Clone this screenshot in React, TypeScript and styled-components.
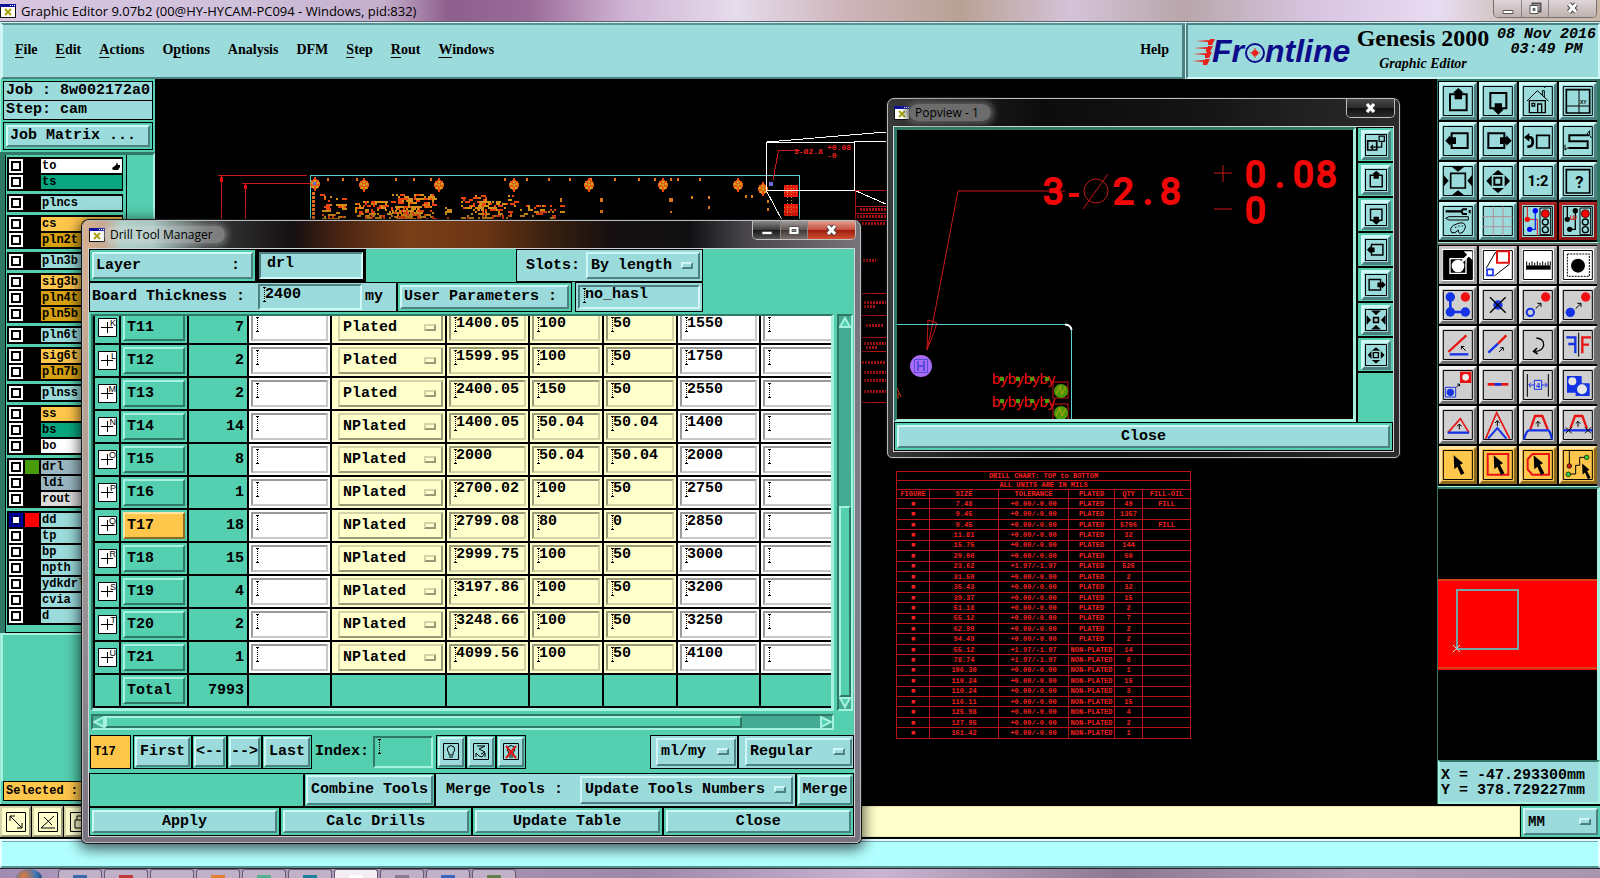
import React from 'react';
import styled, { createGlobalStyle, css } from 'styled-components';

const aqua = '#9cdbdb';
const teal = '#54cfb0';
const tealDark = '#2f7866';
const cream = '#ffffcc';
const orange = '#ffc64c';
const mono = "'Liberation Mono', 'Courier New', monospace";
const ui = "'Open Sans', 'Noto Sans', sans-serif";
const serif = "'Liberation Serif', 'Times New Roman', serif";

const tones = {
  aqua: { bg: aqua, light: '#cff7f5', dark: '#4d8080' },
  teal: { bg: teal, light: '#a4f2df', dark: '#2f7866' },
  white: { bg: '#ffffff', light: '#c8c8c8', dark: '#9a9a9a' },
  silver: { bg: '#cfcfcf', light: '#f2f2f2', dark: '#6e6e6e' },
  cream: { bg: cream, light: '#d4d4a8', dark: '#9a9a78' },
  orange: { bg: orange, light: '#ffe3a3', dark: '#8c6a20' },
  red: { bg: aqua, light: '#b32424', dark: '#8f1616' },
};
type Tone = keyof typeof tones;

const raised = (t: Tone, w = 2) => css`
  background: ${tones[t].bg};
  border: ${w}px solid;
  border-color: ${tones[t].light} ${tones[t].dark} ${tones[t].dark} ${tones[t].light};
`;
const sunken = (t: Tone, w = 2) => css`
  background-color: ${tones[t].bg};
  border: ${w}px solid;
  border-color: ${tones[t].dark} ${tones[t].light} ${tones[t].light} ${tones[t].dark};
`;

const Global = createGlobalStyle`
  *, *::after { box-sizing: border-box; }
  body { margin: 0; background: #000; font: bold 15px/18px ${mono}; color: #000; overflow: hidden; }
  button, input, select { font: inherit; color: inherit; margin: 0; border-radius: 0; outline: 0; }
  button { cursor: pointer; }
  svg { display: block; }
`;

/* ---------- page frame ---------- */

const Page = styled.div`
  position: relative;
  display: flex;
  flex-direction: column;
  min-height: 100vh;
  overflow: hidden;
`;

const TitleBar = styled.header`
  display: flex;
  align-items: center;
  height: 22px;
  flex: none;
  border-bottom: 1px solid #5d6470;
  background: linear-gradient(90deg, #d9c6e0 0%, #cfc0dc 15%, #c4aecb 24%, #8e5f8c 28%, #9a6a98 33%, #cfb3d3 39%, #e6dcec 46%, #cdb4b9 53%, #b8a295 60%, #d5c2d8 67%, #b8a6aa 74%, #d8c4e0 82%, #e8dcf2 90%, #cbbdb2 95%, #c7b8a6 100%);
`;
const TitleText = styled.span`
  flex: 1;
  margin-left: 5px;
  font: 13px/20px ${ui};
`;
const Controls = styled.div`
  display: flex;
  align-self: flex-start;
  height: 18px;
  margin-right: 3px;
  border: 1px solid #77706e;
  border-top: 0;
  border-radius: 0 0 5px 5px;
  overflow: hidden;
`;
const ControlButton = styled.button<{ $w: number; $bg?: string }>`
  width: ${(p) => p.$w}px;
  padding: 0;
  display: grid;
  place-items: center;
  border: 0;
  border-right: 1px solid #8b8482;
  background: ${(p) => p.$bg || 'linear-gradient(#e0d6da, #bfb2ae)'};
  &:last-child { border-right: 0; }
`;

const MenuRow = styled.div`
  display: flex;
  gap: 1px;
  height: 57px;
  flex: none;
  background: #cff3f3;
  padding: 1px 0 0 1px;
`;
const MenuBar = styled.nav`
  flex: 1;
  display: flex;
  align-items: center;
  gap: 18px;
  padding: 0 13px 2px 12px;
  font: bold 14px/18px ${serif};
  ${raised('aqua')}
  border-top-color: #5c8f90;
  border-right-width: 3px;
`;
const MenuLink = styled.a`
  color: inherit;
  text-decoration: none;
  &:last-child { margin-left: auto; }
  u { text-underline-offset: 3px; text-decoration-skip-ink: none; }
`;
const Brand = styled.div`
  width: 414px;
  display: grid;
  grid-template-columns: 165px 136px 1fr;
  padding: 0 2px 2px 2px;
  ${raised('aqua')}
  border-color: #4d8080 #cff7f5 #cff7f5 #4d8080;
`;
const Product = styled.div`
  display: flex;
  flex-direction: column;
  align-items: center;
  white-space: nowrap;
`;
const ProductName = styled.div`
  font: bold 24px/27px ${serif};
`;
const ProductPart = styled.div`
  font: italic bold 14px/24px ${serif};
`;
const Clock = styled.div`
  font: italic bold 15px/15px ${mono};
  text-align: center;
  white-space: nowrap;
  padding-top: 2px;
  margin-left: 6px;
`;

const Main = styled.main`
  flex: 1;
  display: grid;
  grid-template-columns: 155px 1fr 163px;
`;

/* ---------- left panel ---------- */

const Side = styled.aside`
  display: flex;
  flex-direction: column;
  background: ${teal};
  padding: 2px 0 0 2px;
  border-left: 1px solid #9eead6;
`;
const InfoLine = styled.div`
  height: 20px;
  margin-bottom: -1px;
  margin-right: 2px;
  padding-left: 2px;
  border: 1px solid #000;
  background: ${aqua};
  white-space: nowrap;
`;
const Framed = styled.div`
  display: flex;
  border: 1px solid #000;
  background: ${teal};
  padding: 2px;
  margin: 3px 2px 2px 0;
  height: 28px;
`;
const WideButton = styled.button<{ $tone?: Tone; $align?: string }>`
  flex: 1;
  min-width: 0;
  padding: 0 ${(p) => (p.$align ? 2 : 0)}px;
  text-align: ${(p) => p.$align || 'center'};
  white-space: pre;
  ${(p) => raised(p.$tone || 'aqua')}
`;
const LayerArea = styled.div`
  display: flex;
  margin-left: -3px;
  border-top: 3px solid ${tealDark};
  border-left: 5px solid ${tealDark};
  border-right: 2px solid #a4f2df;
`;
const LayerList = styled.div`
  width: 122px;
  height: 478px;
  border-right: 1px solid #000;
  border-left: 1px solid #000;
  border-bottom: 1px solid #000;
  padding: 2px 3px 0 1px;
  display: flex;
  flex-direction: column;
  gap: 3px;
`;
const LayerGroup = styled.div`
  background: #000;
  padding: 1px 1px 1px 2px;
`;
const LayerLine = styled.label<{ $bg: string }>`
  display: grid;
  grid-template-columns: 14px 14px 1fr;
  gap: 2px;
  height: 16px;
  padding: 1px 0;
  align-items: stretch;
  font-size: 12px;
  line-height: 14px;
  i { width: 14px; height: 14px; }
  b { background: ${(p) => p.$bg}; padding: 0 1px; display: flex; justify-content: space-between; align-items: center; overflow: hidden; }
`;
const LayerCheck = styled.input<{ $on?: boolean }>`
  appearance: none;
  width: 14px;
  height: 14px;
  background: #fff;
  border: 2px solid ${(p) => (p.$on ? '#0000a8' : '#fff')};
  box-shadow: inset 0 0 0 2px ${(p) => (p.$on ? '#000060' : '#000')};
`;
const Swatch = styled.i<{ $c: string }>`
  background: ${(p) => p.$c};
`;
const SideFill = styled.div`
  flex: 1;
  margin-left: -2px;
  border-top: 2px solid #a4f2df;
  border-left: 2px solid #a4f2df;
`;
const Selected = styled.div`
  height: 20px;
  margin: 0 2px 3px 0;
  border: 1px solid #000;
  background: ${orange};
  font-size: 12px;
  padding-left: 2px;
`;

/* ---------- canvas ---------- */

const Canvas = styled.section`
  position: relative;
  background: #000;
  overflow: hidden;
`;
const CanvasDrawing = styled.svg`
  position: absolute;
  inset: 0;
  width: 100%;
  height: 100%;
`;
const Chart = styled.table`
  position: absolute;
  left: 741px;
  top: 392px;
  width: 294px;
  height: 268px;
  table-layout: fixed;
  border-collapse: collapse;
  color: #f42020;
  font: bold 7px/8px ${mono};
  text-align: center;
  white-space: nowrap;
  th, td { border: 1px solid #b81414; padding: 0; font-weight: inherit; }
`;

/* ---------- right panel ---------- */

const Tools = styled.aside`
  display: flex;
  flex-direction: column;
  background: #000;
  border-left: 1px solid ${tealDark};
`;
const ToolGrid = styled.div<{ $edge: string }>`
  display: grid;
  grid-template-columns: repeat(4, 38px);
  gap: 2px;
  padding: 1px 0 2px 1px;
  border-top: 2px solid ${(p) => p.$edge};
  border-bottom: 1px solid #a4f2df;
  border-right: 3px solid ${(p) => p.$edge};
`;
const ToolButton = styled.button<{ $tone: Tone }>`
  width: 38px;
  height: 38px;
  padding: 0;
  ${(p) => raised(p.$tone, 3)}
  svg { margin: -3px; }
`;
const Overview = styled.div`
  flex: 1;
  display: flex;
  align-items: center;
  border-right: 3px solid #a4f2df;
  border-top: 2px solid ${tealDark};
`;
const Coordinates = styled.div`
  height: 44px;
  border: 2px solid #a4f2df;
  border-top-color: ${tealDark};
  background: ${aqua};
  padding: 6px 1px;
  line-height: 15px;
  white-space: pre;
`;

/* ---------- bottom ---------- */

const PromptRow = styled.div`
  display: flex;
  height: 35px;
  flex: none;
  background: #000;
  padding: 2px 0;
  gap: 1px;
`;
const SmallTool = styled.button`
  width: 31px;
  padding: 0;
  display: grid;
  place-items: center;
  ${raised('cream')}
`;
const Prompt = styled.input`
  flex: 1;
  border: 1px solid #e6e6b4;
  background: ${cream};
`;
const UnitsPanel = styled.div`
  width: 79px;
  display: flex;
  padding: 2px;
  background: ${teal};
  font-size: 14px;
  select { padding-left: 8px; }
`;
const StatusLine = styled.div`
  height: 29px;
  flex: none;
  background: #b2ffff;
  border: 2px solid #e4ffff;
  border-bottom-color: #58908f;
  box-shadow: inset 0 1px #7ab;
`;
const TaskBar = styled.footer`
  display: flex;
  gap: 2px;
  height: 10px;
  flex: none;
  border-top: 1px solid #2b2530;
  padding-left: 16px;
  background: linear-gradient(90deg, #9f8ab0 0%, #bba5c8 8%, #9d88a8 40%, #c9b4d2 55%, #8d7891 70%, #b4a0b8 85%, #a895ae 100%);
`;
const Orb = styled.span`
  width: 26px;
  height: 18px;
  margin-right: 14px;
  border-radius: 50%;
  background: radial-gradient(circle at 30% 40%, #e07a3a, #3c76b8 60%, #1c3458);
`;
const Task = styled.button<{ $on?: boolean }>`
  width: 44px;
  padding: 0;
  display: flex;
  justify-content: center;
  border: 1px solid #6a5a70;
  border-bottom: 0;
  border-radius: 3px 3px 0 0;
  background: ${(p) => (p.$on ? '#f2eef4' : '#c0b0c8')};
  i { margin-top: 5px; width: 14px; height: 3px; }
`;

/* ---------- floating windows ---------- */

const Frame = styled.section<{ $x: number; $y: number; $w: number; $dark?: boolean }>`
  position: absolute;
  left: ${(p) => p.$x}px;
  top: ${(p) => p.$y}px;
  width: ${(p) => p.$w}px;
  padding: 0 5px 5px;
  border: 1px solid #b8bcc0;
  border-radius: 7px 7px 5px 5px;
  background: ${(p) =>
    p.$dark
      ? 'linear-gradient(90deg, #3a3a3a, #202020 12%, #0c0c0c 30%, #141414 60%, #2c2c2c)'
      : 'linear-gradient(transparent 30px, rgba(130,135,150,.7) 60%, #77727e), linear-gradient(90deg, #d6b090 0%, #c4a890 3%, #a9d3c8 5%, #a3c6c0 9%, #383a3a 16%, #151012 27%, #4a2412 33%, #7a3f18 42%, #6b3414 52%, #38200f 60%, #160f10 68%, #101012 78%, #47454a 85%, #77747a 100%)'};
  box-shadow: ${(p) => (p.$dark ? '0 0 0 1px #111' : '0 0 0 1px #151515, 0 3px 14px 3px rgba(0,0,0,.65)')};
`;
const FrameTitle = styled.header<{ $dark?: boolean }>`
  display: flex;
  align-items: center;
  gap: 6px;
  height: 27px;
  padding-left: 1px;
  font: 12px/16px ${ui};
  h2 {
    flex: 1;
    margin: 0;
    font: inherit;
  }
  span {
    color: #000;
    padding: 0 12px 0 6px;
    margin-left: -7px;
    border-radius: 9px;
    background: ${(p) => (p.$dark ? '#6c6c6c' : 'rgba(215,215,215,.45)')};
    box-shadow: 0 0 6px 3px ${(p) => (p.$dark ? '#5c5c5c' : 'rgba(200,205,205,.4)')};
  }
`;
const FrameControls = styled(Controls)`
  height: 19px;
  margin-right: -1px;
  border-color: #c0c0c0;
`;
const Client = styled.div`
  border: 1px solid #d0d4d8;
  background: ${teal};
`;

const PopBody = styled.div`
  display: grid;
  grid-template-columns: 1fr 37px;
  background: #000;
`;
const PopView = styled.div`
  border: 3px solid;
  border-color: ${tealDark} #a4f2df #a4f2df ${tealDark};
  svg { width: 100%; }
`;
const PopTools = styled.div`
  background: ${teal};
  display: flex;
  flex-direction: column;
  border-top: 1px solid #000;
  border-left: 2px solid #000;
`;
const PopCell = styled.div`
  height: 35px;
  padding: 2px 2px 1px 3px;
  border-bottom: 2px solid #000;
`;
const PopButton = styled.button`
  width: 30px;
  height: 30px;
  padding: 0;
  display: grid;
  place-items: center;
  ${raised('aqua', 3)}
  svg { border: 1px solid #000; }
`;
const PopFoot = styled.div`
  display: flex;
  height: 29px;
  padding: 2px;
  border: 1px solid #000;
`;

const Bar = styled.div<{ $h: number }>`
  display: flex;
  height: ${(p) => p.$h}px;
`;
const Cell = styled.div<{ $w?: number; $tone?: Tone; $plain?: boolean; $pad?: string }>`
  ${(p) => (p.$w ? `width: ${p.$w}px; flex: none;` : 'flex: 1;')}
  display: flex;
  align-items: center;
  padding: ${(p) => p.$pad || '2px'};
  background: ${(p) => tones[p.$tone || 'teal'].bg};
  border: 1px solid ${(p) => (p.$plain ? 'transparent' : '#000')};
  white-space: pre;
  > button { align-self: stretch; }
`;
const FieldLabel = styled.label<{ $before: number; $after: number }>`
  padding: 0 ${(p) => p.$after}px 0 ${(p) => p.$before}px;
`;
const Entry = styled.input<{ $tone: Tone; $mark?: boolean }>`
  width: 100%;
  min-width: 0;
  align-self: stretch;
  padding: 0 0 4px ${(p) => (p.$mark ? 5 : 6)}px;
  ${(p) => sunken(p.$tone)}
  ${(p) =>
    p.$mark &&
    css`
      background-image: linear-gradient(#000, #000), linear-gradient(#000, #000), repeating-linear-gradient(#000 0 1px, transparent 1px 2px);
      background-size: 3px 1px, 3px 1px, 1px 14px;
      background-position: 3px 1px, 3px 15px, 4px 2px;
      background-repeat: no-repeat;
    `}
`;
const ThicknessEntry = styled(Entry)`
  width: 104px;
  margin-right: 3px;
`;
const Focus = styled.div`
  width: 110px;
  display: flex;
  border: 3px solid #000;
`;
const Picker = styled.span<{ $tone: Tone }>`
  position: relative;
  display: flex;
  flex: 1;
  align-self: stretch;
  &::after {
    content: '';
    position: absolute;
    right: 7px;
    top: 50%;
    width: 12px;
    height: 7px;
    margin-top: -4px;
    pointer-events: none;
    ${(p) => raised(p.$tone)}
  }
  select {
    appearance: none;
    flex: 1;
    width: 100%;
    padding: 0 3px;
    ${(p) => raised(p.$tone)}
  }
`;
const GridRow = styled.div`
  display: grid;
  grid-template-columns: 745px 1fr;
  height: 397px;
  margin-top: 2px;
`;
const Viewport = styled.div`
  overflow: hidden;
  margin-left: 2px;
  border-style: solid;
  border-width: 2px 3px 3px 2px;
  border-color: ${tealDark} #a4f2df #a4f2df ${tealDark};
`;
const ToolTable = styled.table`
  width: 758px;
  margin-top: -4px;
  table-layout: fixed;
  border-spacing: 0;
  td, th {
    height: 33px;
    padding: 2px;
    border-right: 2px solid #000;
    border-bottom: 2px solid #000;
    font-weight: bold;
  }
  td:first-child { border-left: 2px solid #000; padding: 0 0 0 3px; }
  td.count { text-align: right; padding-right: 3px; }
  td.plating { background: ${cream}; padding-left: 6px; }
  td.cream { background: ${cream}; }
  td.white { background: #fff; }
  td > *, th > * { height: 27px; }
  td > input { display: block; padding-bottom: 8px; }
  td:first-child > svg { height: 19px; }
`;
const ToolName = styled.button<{ $tone: Tone }>`
  display: block;
  width: 62px;
  padding: 0 2px;
  text-align: left;
  ${(p) => raised(p.$tone)}
`;
const VScroll = styled.div`
  width: 16px;
  margin-left: 3px;
  display: flex;
  flex-direction: column;
  justify-content: space-between;
  background: #45aa93;
  border: 2px solid;
  border-color: ${tealDark} #a4f2df #a4f2df ${tealDark};
  i { flex: 1; margin-top: 178px; ${raised('teal')} }
`;
const HScroll = styled.div`
  display: flex;
  width: 743px;
  height: 16px;
  margin: 3px 0 5px 2px;
  background: #45aa93;
  border: 2px solid;
  border-color: ${tealDark} #a4f2df #a4f2df ${tealDark};
  i { flex: 1; margin-right: 78px; ${raised('teal')} }
`;
const Current = styled.div`
  width: 41px;
  display: flex;
  align-items: center;
  padding-left: 3px;
  margin: 0 2px 0 1px;
  border: 1px solid #000;
  background: ${orange};
  font-size: 12px;
`;
const IndexLabel = styled.label`
  display: flex;
  align-items: center;
  gap: 4px;
  width: 124px;
  padding: 1px 3px;
  white-space: nowrap;
`;
const GlyphButton = styled(WideButton)`
  display: grid;
  place-items: center;
  padding: 0;
`;

/* ---------- icons, on a 114 unit grid ---------- */

const K = '#000';
const R = '#e81414';
const B = '#1432e6';
const S = ({ d, c = K, w = 5, f = 'none' }: { d: string; c?: string; w?: number; f?: string }) => (
  <path d={d} stroke={c} strokeWidth={w} fill={f} />
);
const F = ({ d, c = K }: { d: string; c?: string }) => <path d={d} fill={c} />;
const C = ({ x, y, r, c = K }: { x: number; y: number; r: number; c?: string }) => <circle cx={x} cy={y} r={r} fill={c} />;

const up = <><S d="M33 37h50v48h-50z" w={6} /><F d="M58 18L74 32H69V52H47V32H42Z" /></>;
const down = <><S d="M34 33h48v46h-48z" w={6} /><F d="M58 98L75 82H69V64H47V82H41Z" /></>;
const left = <><S d="M38 34h48v44h-48z" w={6} /><F d="M19 56L34 40V46H51V66H34V72Z" /></>;
const right = <><S d="M28 34h48v44h-48z" w={6} /><F d="M98 56L82 40V46H63V66H82V72Z" /></>;
const inward = <><S d="M35 34h44v44h-44z" w={5} /><F d="M38 14H76L57 29ZM38 100H76L57 85ZM13 38V74L29 56ZM100 38V74L85 56Z" /></>;
const outward = <><S d="M46 47h21v21h-21z" w={6} /><F d="M39 39H75L57 24ZM39 78H75L57 93ZM38 40V74L22 57ZM77 40V74L93 57Z" /></>;
const popInward = <><S d="M47 47h20v20h-20z" w={7} /><F d="M36 17H78L57 36ZM36 97H78L57 78ZM17 36V78L36 57ZM97 36V78L78 57Z" /></>;
const popOut = <><S d="M22 40h38v38h-38z" w={7} /><S d="M70 20h22v22h-22zM81 42v24H36m9-9l-10 9 10 9" w={5} /></>;
const cursor = <F d="M44 28L72 52L63 56L76 82L66 87L55 62L46 70Z" />;
const signal = <><S d="M63 18h32v80h-32z" w={3} /><circle cx="79" cy="35" r="12" fill="#f00" stroke={K} strokeWidth="2" /><circle cx="79" cy="60" r="9" fill="none" stroke={K} strokeWidth="4" /><circle cx="79" cy="83" r="9" fill="none" stroke={K} strokeWidth="4" /></>;
const tinyArrow = (x: number, y: number, dx: number, dy: number) => (
  <S d={`M${x} ${y}l${16 * dx} ${16 * dy}m0 ${-11 * dy}v${11 * dy}h${-11 * dx}`} w={3} />
);
const tinyUp = (x: number, y: number) => <S d={`M${x} ${y}v-16m-7 7l7 -7l7 7`} w={3} />;

const navIcons: [string, React.ReactNode, Tone][] = [
  ['Pan up', up, 'aqua'],
  ['Pan down', down, 'aqua'],
  ['Home', <><S d="M31 56h48v36h-48zM56 92V66H68V92M39 64h8v8h-8z" w={4} /><S d="M24 57L55 26L88 57M70 40V26h6V46M76 18l4 -6" w={3} /></>, 'aqua'],
  ['Zoom to coordinates', <><S d="M22 23h70v70h-70z" /><S d="M60 23V93M22 72H92" w={3} /><text x="63" y="67" fontSize="15" fontFamily="Liberation Sans" fontWeight="bold">XY</text></>, 'aqua'],
  ['Pan left', left, 'aqua'],
  ['Pan right', right, 'aqua'],
  ['Previous view', <><S d="M53 40h38v38h-38z" w={5} /><S d="M28 46H32Q41 46 41 57V62Q41 74 25 74" w={8} /><F d="M15 46L31 33V59Z" /></>, 'aqua'],
  ['Snake', <><S d="M90 40H31V58H86V78H28" w={6} /><S d="M84 36l8-10v14M92 40l6 8M18 68v16l10-8" w={3} /></>, 'aqua'],
  ['Zoom in', inward, 'aqua'],
  ['Zoom out', outward, 'aqua'],
  ['Scale 1:2', <text x="57" y="73" fontSize="44" fontWeight="bold" textAnchor="middle" fontFamily="Roboto">1:2</text>, 'aqua'],
  ['Help on tool', <><S d="M22 23h70v70h-70z" w={5} /><text x="61" y="77" fontSize="50" fontWeight="bold" textAnchor="middle" fontFamily="Roboto">?</text></>, 'aqua'],
  ['Settings', <><S d="M20 28H66" w={7} /><S d="M84 22H72Q64 28 72 36H84M92 24v10" w={6} /><S d="M20 49l10-5H88v10H30Z" w={3} /><S d="M38 92Q30 78 44 70Q70 56 78 68Q82 76 72 90Q58 100 58 84Q48 96 38 92ZM48 76h4M58 72h4M68 72h4" w={3} /></>, 'aqua'],
  ['Grid', <S d="M43 13V101M72 13V101M12 44H100M12 74H100" c="#b58f98" w={3} />, 'aqua'],
  ['Net signal', <><S d="M25 13V52H55V101" c={R} w={3} /><C x={25} y={52} r={8} c="#f00" /><S d="M49 26V82H32" c={B} w={4} /><C x={49} y={26} r={8} c="#00f" /><C x={32} y={82} r={8} c="#00f" />{signal}</>, 'red'],
  ['Measure signal', <><S d="M25 13V52M49 26V82H32" w={4} /><C x={25} y={52} r={8} /><C x={49} y={26} r={8} /><C x={32} y={82} r={8} /><S d="M35 40v12h16V40M43 40v12" c={R} w={3} />{signal}</>, 'red'],
];

const editIcons: [string, React.ReactNode, Tone][] = [
  ['Add feature', <><F d="M14 13h86v86h-86z" /><S d="M33 38h48v44h-48z" c="#fff" w={4} /><C x={57} y={60} r={19} c="#fff" /><S d="M70 46L90 26" c="#fff" w={8} /><F d="M74 16H100V42Z" c="#fff" /></>, 'white'],
  ['Scale feature', <><S d="M54 16h36v34h-36z" c={R} w={6} /><S d="M24 70h18v18h-18z" c={B} w={5} /><S d="M22 66L50 18M46 90L92 54" w={3} /></>, 'white'],
  ['Ruler', <><F d="M21 58h74v13h-74z" /><S d="M23 58V46M31 58V50M39 58V46M47 58V50M55 58V46M63 58V50M71 58V46M79 58V50M87 58V46M94 58V46" w={3} /></>, 'white'],
  ['Select circle', <><rect x="25" y="24" width="66" height="67" fill="none" stroke={K} strokeWidth="3" strokeDasharray="6 3" /><C x={57} y={59} r={21} /></>, 'white'],
  ['Chain', <><S d="M34 33V78H79" c={B} w={8} /><C x={34} y={33} r={14} c={B} /><C x={34} y={78} r={14} c={B} /><C x={79} y={78} r={14} c={B} /><C x={79} y={33} r={14} c="#f21010" /></>, 'silver'],
  ['Delete', <><C x={57} y={57} r={14} c={B} /><S d="M33 34L80 80M80 34L33 80" w={4} /></>, 'silver'],
  ['Copy', <><C x={80} y={33} r={14} c="#f21010" /><circle cx="34" cy="79" r="11" fill="none" stroke={B} strokeWidth="6" />{tinyArrow(50, 68, 1, -1)}</>, 'silver'],
  ['Move', <><C x={80} y={33} r={14} c="#f21010" /><C x={34} y={79} r={14} c={B} />{tinyArrow(50, 68, 1, -1)}</>, 'silver'],
  ['Rotate', <><S d="M28 78L82 28" c={R} w={7} /><S d="M32 85H88" c={B} w={7} />{tinyArrow(80, 74, -0.8, -0.8)}</>, 'silver'],
  ['Stretch', <><S d="M28 80L57 53" c={B} w={7} /><S d="M57 53L82 28" c={R} w={7} />{tinyArrow(60, 78, 0.8, -0.8)}</>, 'silver'],
  ['Undo', <><S d="M52 36Q76 38 74 58Q70 76 48 76" w={4} /><S d="M54 66L44 76L56 84" w={5} /></>, 'silver'],
  ['Mirror', <><S d="M22 34H49V82M28 54H49" c={B} w={7} /><S d="M96 34H70V82M70 56H90" c={R} w={7} /><S d="M59 20V92" w={3} /></>, 'silver'],
  ['Replace', <><F d="M63 17h34v34h-34z" c={R} /><C x={80} y={34} r={10} c="#eee" /><S d="M19 64h31v29h-31z" c={B} w={3} /><C x={34} y={79} r={11} c={B} />{tinyArrow(52, 64, 0.6, -0.6)}</>, 'silver'],
  ['Break', <><S d="M26 55H88" c={R} w={8} /><S d="M47 55H67" c={B} w={8} /></>, 'silver'],
  ['Spacing', <><S d="M25 24V92M88 24V92" w={3} /><S d="M30 57H46M68 57H84M36 50L29 57L36 64M78 50L85 57L78 64M46 43h22v27h-22z" c={B} w={3} /><text x="57" y="65" fontSize="22" textAnchor="middle" fill={B} fontWeight="bold" fontFamily="Liberation Sans">4</text></>, 'silver'],
  ['Merge shapes', <><F d="M24 30h44v50h-44zM50 52h42v38h-42z" c={B} /><C x={40} y={46} r={12} c="#e4e4e4" /><C x={69} y={70} r={15} c="#e4e4e4" /></>, 'silver'],
  ['Triangle', <><S d="M27 80L64 38L90 80" c={R} /><S d="M26 80H90" c={B} w={7} />{tinyUp(61, 70)}</>, 'silver'],
  ['Peak', <><S d="M20 98L53 20L92 98" c={R} w={5} /><S d="M27 98L55 66L82 98" c={B} w={6} />{tinyUp(55, 60)}</>, 'silver'],
  ['Trapezoid', <><S d="M34 70L48 30H70L86 70" c={R} w={7} /><S d="M15 100Q22 74 30 73H88Q94 76 99 100" c={B} w={7} />{tinyUp(57, 62)}</>, 'silver'],
  ['Trim', <><S d="M34 68L48 30H70L84 68" c={R} w={7} /><S d="M12 73H100" c={B} w={7} /><S d="M20 64L38 82M38 64L20 82M78 64L96 82M96 64L78 82" w={3} />{tinyUp(57, 62)}</>, 'silver'],
  ['Select', cursor, 'orange'],
  ['Select in frame', <><S d="M26 24h62v62h-62z" c={R} w={6} />{cursor}</>, 'orange'],
  ['Select in polygon', <><S d="M40 24H90V86H40L26 70V40Z" c={R} w={6} />{cursor}</>, 'orange'],
  ['Select net', <><S d="M31 14V58M31 84H50V58H62V34H80" w={3} /><circle cx="31" cy="60" r="7" fill="#c02010" stroke={K} strokeWidth="2" /><circle cx="28" cy="85" r="7" fill="#30d030" stroke={K} strokeWidth="2" /><circle cx="83" cy="34" r="7" fill="#30d030" stroke={K} strokeWidth="2" /><g transform="translate(34 30) scale(.8)">{cursor}</g></>, 'orange'],
];

const ToolIcon = ({ children }: { children: React.ReactNode }) => (
  <svg width="38" height="38" viewBox="0 0 114 114">
    <path d="M13 13.500h87v87h-87z" fill="none" stroke="#000" strokeWidth="3" />
    {children}
  </svg>
);

const AppGlyph = () => (
  <svg width="16" height="16" viewBox="0 0 16 16">
    <path d="M0 1h16v14H0z" fill="#111" />
    <path d="M1 4h14v10H1z" fill="#fff" />
    <path d="M0 1h16v3H0z" fill="#10109a" />
    <path d="M10 2h1v1h-1zM12 2h1v1h-1zM14 2h1v1h-1z" fill="#fff" />
    <path d="M5 6l6 6M11 6l-6 6" stroke="#a8a410" strokeWidth="2" />
  </svg>
);
const WinMin = () => (
  <svg width="14" height="12"><path d="M2 7.500h10v3H2z" fill="#fff" stroke="#555" /></svg>
);
const WinMax = ({ double }: { double?: boolean }) => (
  <svg width="14" height="13">
    {double && <path d="M4.500 1.500h8v8h-8z" fill="none" stroke="#555" strokeWidth="2" />}
    <path d={double ? 'M2 3.500h8v8H2z' : 'M2 2.500h10v8H2z'} fill="#fff" stroke="#555" />
    <path d={double ? 'M5 6.500h2v2H5z' : 'M5 5.500h4v2H5z'} fill="#999" stroke="#555" />
  </svg>
);
const WinClose = () => (
  <svg width="14" height="13">
    <path d="M3 2l7 8M10 2l-7 8" stroke="#444" strokeWidth="5" />
    <path d="M3 2l7 8M10 2l-7 8" stroke="#fff" strokeWidth="3" />
  </svg>
);

const Logo = () => (
  <svg width="165" height="50" viewBox="1191 24 165 50">
    <path
      d="M1197 40l14-1v-1h5l-3 6h-4v-3zM1195 47l14-1v-1h5l-3 6h-4v-3zM1194 53l14-1v-1h5l-3 6h-4v-3zM1193 60l13-1v-1h5l-3 6h-4v-3z"
      fill="#e8221a"
    />
    <g fontFamily="Liberation Sans" fontWeight="bold" fontStyle="italic" fontSize="32" fill="#0d0d8c">
      <text x="1213" y="61">Fr</text>
      <text x="1266" y="61">ntline</text>
    </g>
    <circle cx="1256" cy="52" r="9" fill="none" stroke="#0d0d8c" strokeWidth="2" />
    <circle cx="1256" cy="52" r="3" fill="#e8221a" />
    <path d="M1256 47v10M1251 52h10" stroke="#e8221a" />
  </svg>
);

/* ---------- board artwork ---------- */

const flowers: [number, number][] = [[315, 184], [364, 185], [439, 185], [514, 185], [589, 185], [663, 185], [738, 185], [763, 189]];
const zones: [number, number, number, number][] = [
  [320, 346, 194, 0.2], [328, 345, 204, 0.35], [355, 392, 201, 0.45], [392, 433, 194, 0.42], [395, 420, 206, 0.4],
  [445, 448, 205, 0.6], [461, 486, 195, 0.3], [478, 500, 201, 0.4], [498, 516, 195, 0.16], [520, 565, 205, 0.16], [605, 612, 212, 0.15],
];
const copper = (() => {
  let seed = 7;
  const next = () => ((seed = (seed * 16807) % 2147483647) / 2147483647);
  const out: React.ReactNode[] = [];
  zones.forEach(([x0, x1, y0, density]) => {
    for (let y = y0; y < 220; y += 2)
      for (let x = x0; x < x1; x += 2)
        if (next() < density)
          out.push(<rect key={`${x0}-${y0}-${x}-${y}`} x={x} y={y} width={next() > 0.7 ? 5 : 2} height={2} fill={next() > 0.45 ? '#d8921a' : '#ee4410'} />);
  });
  return out;
})();
const dots = [327, 342, 356, 395, 413, 430, 504, 526, 548, 569, 590, 614, 638, 654, 670, 677, 699];

const BoardArt = () => (
  <CanvasDrawing>
    <g transform="translate(-155 -79)" fill="none" shapeRendering="crispEdges">
      <path d="M218 175.500H307M242 183.500H311M221.500 175V240M245.500 183V240" stroke="#c81818" />
      <path d="M220 177h3v5h-3zM244 185h3v4h-3z" fill="#e01010" />
      <path d="M310.500 240V175.500H799.500V240" stroke="#5ccfd0" />
      <path d="M313.500 192V220" stroke="#e8701a" strokeWidth="3" strokeDasharray="3 1" />
      {copper}
      {dots.map((x) => <path key={x} d={`M${x} 178h2v3h-2z`} fill="#e8701a" />)}
      {flowers.map(([x, y]) => (
        <g key={x}>
          <circle cx={x} cy={y} r="5" fill="#e85a12" />
          <path d={`M${x - 1} ${y - 7}h2v3h-2zM${x - 1} ${y + 4}h2v3h-2z`} fill="#f04a10" />
          <path d={`M${x - 4} ${y - 2}h2v2h-2zM${x + 2} ${y - 2}h2v2h-2zM${x - 1} ${y - 4}h2v2h-2zM${x - 3} ${y + 2}h2v2h-2zM${x + 1} ${y + 2}h2v2h-2zM${x - 1} ${y - 1}h2v2h-2z`} fill="#c8a820" />
        </g>
      ))}
      <path d="M313 182h3v3h-3zM769 182h4v4h-4z" fill="#6a6ad8" />
      <path d="M600 198h3v4h-3zM600 210h3v3h-3zM669 198h4v4h-4zM670 211h2v2h-2zM691 196h2v3h-2zM708 196h2v3h-2zM708 206h2v3h-2zM745 195h2v3h-2zM751 195h2v3h-2zM767 200h2v3h-2zM767 208h2v3h-2zM560 198h2v4h-2z" fill="#d87a1a" />
      <path d="M784 185h14v12h-14zM784 204h14v12h-14z" fill="#e81810" />
      <path d="M784 188.500h14M784 192.500h14M784 207.500h14M784 211.500h14M787.500 185v31M791.500 185v31" stroke="#c88a20" strokeDasharray="1 2" />
      <path d="M766.500 190.500V142.500H854.500V190.500ZM766 190L783 222M767 142L886 132M854 142L888 141M854 190L888 205" stroke="#fff" />
      <path d="M773 180L778.500 150.500H800" stroke="#c81818" />
      <path d="M855.500 190V400M855 190.500H888M855 206.500H888M855 213.500H888M855 220.500H888M861 293.500H890M861 315.500H890M861 337.500H890M861 351.500H890M861 402.500H890" stroke="#b01414" />
      <g fill="#f02020" fontFamily="Liberation Mono" fontSize="8" fontWeight="bold">
        <text x="794" y="154">3-Ø2.8</text>
        <text x="827" y="150">+0.08<tspan x="827" y="158">-0</tspan></text>
      </g>
      <path d="M860 209.500H886M857 216.500H886M862 223.500H886M863 260.500H876M864 302.500H886M864 306.500H876M866 325.500H884M864 343.500H886M866 347.500H878M862 362.500H886M864 372.500H886M864 380.500H886M864 391.500H886" stroke="#a81212" strokeWidth="3" strokeDasharray="2 1" />
    </g>
  </CanvasDrawing>
);

const chartRows: string[][] = [
  ['7.48', '+0.00/-0.00', 'PLATED', '49', 'FILL'],
  ['9.45', '+0.00/-0.00', 'PLATED', '1357', ''],
  ['9.45', '+0.00/-0.00', 'PLATED', '5706', 'FILL'],
  ['11.81', '+0.00/-0.00', 'PLATED', '32', ''],
  ['15.75', '+0.00/-0.00', 'PLATED', '144', ''],
  ['20.00', '+0.00/-0.00', 'PLATED', '60', ''],
  ['23.62', '+1.97/-1.97', 'PLATED', '526', ''],
  ['31.50', '+0.00/-0.00', 'PLATED', '2', ''],
  ['35.43', '+0.00/-0.00', 'PLATED', '32', ''],
  ['39.37', '+0.00/-0.00', 'PLATED', '15', ''],
  ['51.18', '+0.00/-0.00', 'PLATED', '2', ''],
  ['55.12', '+0.00/-0.00', 'PLATED', '7', ''],
  ['62.99', '+0.00/-0.00', 'PLATED', '2', ''],
  ['94.49', '+0.00/-0.00', 'PLATED', '2', ''],
  ['55.12', '+1.97/-1.97', 'NON-PLATED', '14', ''],
  ['78.74', '+1.97/-1.97', 'NON-PLATED', '8', ''],
  ['106.30', '+0.00/-0.00', 'NON-PLATED', '1', ''],
  ['110.24', '+0.00/-0.00', 'NON-PLATED', '15', ''],
  ['110.24', '+0.00/-0.00', 'NON-PLATED', '3', ''],
  ['116.11', '+0.00/-0.00', 'NON-PLATED', '15', ''],
  ['125.98', '+0.00/-0.00', 'NON-PLATED', '4', ''],
  ['127.95', '+0.00/-0.00', 'NON-PLATED', '2', ''],
  ['161.42', '+0.00/-0.00', 'NON-PLATED', '1', ''],
];

const DrillChart = () => (
  <Chart>
    <colgroup>{[33, 69, 70, 46, 28, 48].map((w, i) => <col key={i} width={w} />)}</colgroup>
    <thead>
      <tr><th colSpan={6}>DRILL CHART: TOP to BOTTOM</th></tr>
      <tr><th colSpan={6}>ALL UNITS ARE IN MILS</th></tr>
      <tr>{['FIGURE', 'SIZE', 'TOLERANCE', 'PLATED', 'QTY', 'FILL-OIL'].map((h) => <th key={h}>{h}</th>)}</tr>
    </thead>
    <tbody>
      {chartRows.map((r, i) => (
        <tr key={i}>
          <td>■</td>
          {r.map((v, j) => <td key={j}>{v}</td>)}
        </tr>
      ))}
    </tbody>
  </Chart>
);

/* ---------- layers ---------- */

const gold = '#d6a010';
const layers: [string, string, string?][][] = [
  [['to', '#fff'], ['ts', '#08a67e']],
  [['plncs', aqua]],
  [['cs', orange], ['pln2t', gold]],
  [['pln3b', aqua]],
  [['sig3b', orange], ['pln4t', gold], ['pln5b', gold]],
  [['pln6t', aqua]],
  [['sig6t', orange], ['pln7b', gold]],
  [['plnss', aqua]],
  [['ss', orange], ['bs', '#08a67e'], ['bo', '#fff']],
  [['drl', '#9ab6c0', '#489c08'], ['ldi', '#9ab6c0'], ['rout', '#dcdcdc']],
  [['dd', aqua, '#f00'], ['tp', aqua], ['bp', aqua], ['npth', aqua], ['ydkdrl', aqua], ['cvia', aqua], ['d', aqua]],
];

const Layers = () => (
  <LayerList>
    {layers.map((group, i) => (
      <LayerGroup key={i}>
        {group.map(([name, bg, swatch]) => (
          <LayerLine key={name} $bg={bg}>
            <LayerCheck type="checkbox" $on={name === 'dd'} />
            <Swatch $c={swatch || '#000'} />
            <b>
              {name}
              {name === 'to' && <svg width="9" height="9" viewBox="0 0 9 9"><path d="M5 0l-1 3-4 3 1 2h5l2-3V3H6z" /></svg>}
            </b>
          </LayerLine>
        ))}
      </LayerGroup>
    ))}
  </LayerList>
);

/* ---------- drill tool manager ---------- */

type Tool = [string, string, number, string, string, string, string, string];
const tools: Tool[] = [
  ['T11', 'K', 7, 'Plated', '1400.05', '100', '50', '1550'],
  ['T12', 'L', 2, 'Plated', '1599.95', '100', '50', '1750'],
  ['T13', 'M', 2, 'Plated', '2400.05', '150', '50', '2550'],
  ['T14', 'N', 14, 'NPlated', '1400.05', '50.04', '50.04', '1400'],
  ['T15', 'O', 8, 'NPlated', '2000', '50.04', '50.04', '2000'],
  ['T16', 'P', 1, 'NPlated', '2700.02', '100', '50', '2750'],
  ['T17', 'Q', 18, 'NPlated', '2799.08', '80', '0', '2850'],
  ['T18', 'R', 15, 'NPlated', '2999.75', '100', '50', '3000'],
  ['T19', 'S', 4, 'NPlated', '3197.86', '100', '50', '3200'],
  ['T20', 'T', 2, 'NPlated', '3248.66', '100', '50', '3250'],
  ['T21', 'U', 1, 'NPlated', '4099.56', '100', '50', '4100'],
];

const ToolMark = ({ letter }: { letter: string }) => (
  <svg width="19" height="19" viewBox="0 0 19 19">
    <path d="M.5.500h18v18H.5z" fill="#fff" stroke="#000" />
    <path d="M9.500 4v11M3 9.500h12" stroke="#000" />
    <text x="18" y="8" fontSize="9" textAnchor="end" fontFamily="Liberation Sans" fontWeight="normal">{letter}</text>
  </svg>
);

const Select = ({ tone, value, label, id }: { tone: Tone; value: string; label?: string; id?: string }) => (
  <Picker $tone={tone}>
    <select id={id} aria-label={label} defaultValue={value}><option>{value}</option></select>
  </Picker>
);
const Arrow = ({ d }: { d: string }) => (
  <svg width="12" height="12" viewBox="0 0 12 12"><path d={d} fill={teal} stroke="#a4f2df" strokeWidth="2" /></svg>
);

const DrillManager = () => (
  <Frame $x={82} $y={220} $w={779} aria-label="Drill Tool Manager">
    <FrameTitle>
      <AppGlyph />
      <h2><span>Drill Tool Manager</span></h2>
      <FrameControls>
        <ControlButton $w={28} $bg="linear-gradient(#8a8a8a, #3a3838 50%, #1a1818 52%, #555)" aria-label="Minimize"><WinMin /></ControlButton>
        <ControlButton $w={27} $bg="linear-gradient(#a09a98, #605855 50%, #403835 52%, #7a706c)" aria-label="Maximize"><WinMax /></ControlButton>
        <ControlButton $w={47} $bg="linear-gradient(#e0a090, #c85040 48%, #a01c0c 52%, #d05030)" aria-label="Close window"><WinClose /></ControlButton>
      </FrameControls>
    </FrameTitle>
    <Client>
      <Bar $h={33}>
        <Cell $w={167}><WideButton $align="left">{'Layer          :'}</WideButton></Cell>
        <Focus><Entry $tone="aqua" aria-label="Layer" defaultValue="drl" /></Focus>
        <Cell $w={150} $plain />
        <Cell $w={187} $tone="aqua">
          <FieldLabel htmlFor="slots" $before={7} $after={6}>Slots:</FieldLabel>
          <Select tone="aqua" value="By length" id="slots" />
        </Cell>
      </Bar>
      <Bar $h={30}>
        <Cell $w={308} $tone="aqua" $pad="1px">
          <FieldLabel htmlFor="thickness" $before={1} $after={13}>Board Thickness :</FieldLabel>
          <ThicknessEntry $tone="aqua" $mark id="thickness" defaultValue="2400" />
          my
        </Cell>
        <Cell $w={175}><WideButton $align="left">User Parameters :</WideButton></Cell>
        <Cell $w={3} $plain $pad="0" />
        <Cell $w={128} $tone="aqua"><Entry $tone="aqua" $mark aria-label="User parameters" defaultValue="no_hasl" /></Cell>
      </Bar>
      <GridRow>
        <Viewport>
          <ToolTable>
            <colgroup>{[28, 68, 60, 83, 115, 83, 74, 74, 83, 90].map((w, i) => <col key={i} width={w} />)}</colgroup>
            <tbody>
              {tools.map(([name, letter, count, plating, size, plus, minus, drill]) => (
                <tr key={name}>
                  <td><ToolMark letter={letter} /></td>
                  <th scope="row"><ToolName $tone={name === 'T17' ? 'orange' : 'teal'}>{name}</ToolName></th>
                  <td className="count">{count}</td>
                  <td className="white"><Entry $tone="white" $mark aria-label={`${name} type`} /></td>
                  <td className="plating"><Select tone="cream" value={plating} label={`${name} plating`} /></td>
                  {[size, plus, minus].map((v, i) => (
                    <td className="cream" key={i}><Entry $tone="cream" $mark aria-label={`${name} value ${i + 1}`} defaultValue={v} /></td>
                  ))}
                  <td className="white"><Entry $tone="white" $mark aria-label={`${name} drill size`} defaultValue={drill} /></td>
                  <td className="white"><Entry $tone="white" $mark aria-label={`${name} designator`} /></td>
                </tr>
              ))}
              <tr>
                <td />
                <th scope="row"><ToolName $tone="teal">Total</ToolName></th>
                <td className="count">7993</td>
                {Array.from({ length: 7 }, (_, i) => <td key={i} />)}
              </tr>
            </tbody>
          </ToolTable>
        </Viewport>
        <VScroll><Arrow d="M6 2L11 11H1Z" /><i /><Arrow d="M6 10L1 1H11Z" /></VScroll>
      </GridRow>
      <HScroll><Arrow d="M1 6L11 1V11Z" /><i /><Arrow d="M11 6L1 1V11Z" /></HScroll>
      <Bar $h={34}>
        <Current>T17</Current>
        <Cell $w={59} $pad="1px"><WideButton>First</WideButton></Cell>
        <Cell $w={35} $pad="1px"><WideButton>{'<--'}</WideButton></Cell>
        <Cell $w={35} $pad="1px"><WideButton>{'-->'}</WideButton></Cell>
        <Cell $w={50} $pad="1px"><WideButton>Last</WideButton></Cell>
        <IndexLabel>Index:<Entry $tone="teal" $mark /></IndexLabel>
        <Cell $w={30} $pad="1px">
          <GlyphButton aria-label="Highlight on">
            <svg width="16" height="18"><path d="M.5.500h15v16H.5zM6 12V10Q3 7 5 4Q8 1 11 4Q13 7 10 10V12H6M6 14H10" fill="none" stroke="#000" /></svg>
          </GlyphButton>
        </Cell>
        <Cell $w={30} $pad="1px">
          <GlyphButton aria-label="Sort tools">
            <svg width="16" height="18"><path d="M.5.500h15v16H.5zM4 3H12L6 6L12 9L8 11M3 14V10L6 13L9 14L12 10V14" fill="none" stroke="#000" /></svg>
          </GlyphButton>
        </Cell>
        <Cell $w={30} $pad="1px">
          <GlyphButton aria-label="Highlight off">
            <svg width="16" height="18"><path d="M.5.500h15v16H.5zM6 12V10Q3 7 5 4Q8 1 11 4Q13 7 10 10V12H6M6 14H10" fill="none" stroke="#000" /><path d="M3 3L13 15M13 3L3 15" stroke="#e01010" strokeWidth="2" /></svg>
          </GlyphButton>
        </Cell>
        <Cell $plain />
        <Cell $w={88} $tone="aqua" $pad="2px 1px 2px 5px"><Select tone="aqua" value="ml/my" label="Units" /></Cell>
        <Cell $w={116} $tone="aqua" $pad="2px 1px 2px 6px"><Select tone="aqua" value="Regular" label="Table mode" /></Cell>
      </Bar>
      <Bar $h={4} />
      <Bar $h={34}>
        <Cell $w={215} />
        <Cell $w={131} $pad="1px"><WideButton>Combine Tools</WideButton></Cell>
        <Cell $tone="aqua">
          <FieldLabel htmlFor="merge" $before={8} $after={17}>Merge Tools :</FieldLabel>
          <Select tone="aqua" value="Update Tools Numbers" id="merge" />
        </Cell>
        <Cell $w={58} $pad="1px"><WideButton>Merge</WideButton></Cell>
      </Bar>
      <Bar $h={29}>
        {['Apply', 'Calc Drills', 'Update Table', 'Close'].map((t) => (
          <Cell key={t}><WideButton>{t}</WideButton></Cell>
        ))}
      </Bar>
    </Client>
  </Frame>
);

/* ---------- popview ---------- */

const popTools: [string, React.ReactNode][] = [
  ['Send view', popOut], ['Up', up], ['Down', down], ['Left', left], ['Right', right], ['Zoom in', popInward], ['Zoom out', outward],
];

const Popview = () => (
  <Frame $x={887} $y={98} $w={513} $dark aria-label="Popview">
    <FrameTitle $dark>
      <AppGlyph />
      <h2><span>Popview - 1</span></h2>
      <FrameControls>
        <ControlButton $w={47} $bg="linear-gradient(#4a4a4a, #2a2a2a 50%, #101010 52%, #2c2c2c)" aria-label="Close window"><WinClose /></ControlButton>
      </FrameControls>
    </FrameTitle>
    <Client>
      <PopBody>
        <PopView>
          <svg height="289" viewBox="897 130 456 289">
            <g fill="none" stroke="#c81818">
              <path d="M1065 191H958L933 322M928 320L927 350L934 332L937 323M928 320L937 323M927 350L933 322" />
              <circle cx="1096" cy="191" r="12" />
              <path d="M1083 209L1108 174M1214 173H1232M1223 165V182M1214 209H1232" />
            </g>
            <path d="M1069 195H1079" stroke="#f00808" strokeWidth="4" />
            <g fill="#f00808" stroke="#f00808" strokeWidth="2" fontFamily="Roboto" fontWeight="normal" fontSize="37">
              <text x="1043" y="204">3</text>
              <text x="1113" y="204">2</text>
              <text x="1143" y="204">.</text>
              <text x="1160" y="204">8</text>
              <text x="1245 1275 1293 1316" y="187">0.08</text>
              <text x="1245" y="223">0</text>
            </g>
            <path d="M896 324.500H1065Q1071 325 1071.500 330V419" fill="none" stroke="#5ccfd0" />
            <path d="M1065 324.500Q1071 325 1071.500 330" fill="none" stroke="#fff" strokeWidth="2" />
            <circle cx="921" cy="366" r="11" fill="#a86cf4" />
            <path d="M914.500 359.500h13v13h-13z" fill="none" stroke="#5a4ae0" />
            <path d="M918 361v10M924 361v10M918 366h6" fill="none" stroke="#5a4ae0" strokeWidth="2" />
            <path d="M897 388l4 9M898 393v6" stroke="#d04010" />
            <g fill="#f01010" fontFamily="Liberation Sans" fontWeight="normal" fontSize="15">
              <text x="992" y="384">bybybyby</text>
              <text x="992" y="407">bybybyby</text>
            </g>
            {[380, 402].map((y) => (
              <g key={y}>
                {[1000, 1016, 1030, 1045].map((x) => <rect key={x} x={x} y={y - 3} width="4" height="4" fill="#489c08" />)}
                <rect x="1053" y={y + 2} width="15" height="16" fill="none" stroke="#c81818" />
                <circle cx="1061" cy={y + 11} r="7" fill="#4c9a0a" />
                <path d={`M1056 ${y + 14}l4-8 2 8 4-8`} fill="none" stroke="#b8a010" />
              </g>
            ))}
          </svg>
        </PopView>
        <PopTools>
          {popTools.map(([name, art]) => (
            <PopCell key={name}>
              <PopButton aria-label={name}>
                <svg width="22" height="22" viewBox="15 15 84 84">{art}</svg>
              </PopButton>
            </PopCell>
          ))}
        </PopTools>
      </PopBody>
      <PopFoot><WideButton>Close</WideButton></PopFoot>
    </Client>
  </Frame>
);

const menus: [string, string, string][] = [
  ['', 'F', 'ile'], ['', 'E', 'dit'], ['', 'A', 'ctions'], ['O', 'p', 'tions'], ['Analysis', '', ''], ['DFM', '', ''],
  ['', 'S', 'tep'], ['', 'R', 'out'], ['', 'W', 'indows'], ['Help', '', ''],
];

export default function App() {
  return (
    <Page>
      <Global />
      <TitleBar>
        <AppGlyph />
        <TitleText>Graphic Editor 9.07b2 (00@HY-HYCAM-PC094 - Windows, pid:832)</TitleText>
        <Controls>
          <ControlButton $w={28} aria-label="Minimize"><WinMin /></ControlButton>
          <ControlButton $w={27} aria-label="Restore"><WinMax double /></ControlButton>
          <ControlButton $w={47} aria-label="Close"><WinClose /></ControlButton>
        </Controls>
      </TitleBar>
      <MenuRow>
        <MenuBar>
          {menus.map(([a, u, b]) => <MenuLink key={a + u + b} href="#">{a}{u && <u>{u}</u>}{b}</MenuLink>)}
        </MenuBar>
        <Brand>
          <Logo />
          <Product>
            <ProductName>Genesis 2000</ProductName>
            <ProductPart>Graphic Editor</ProductPart>
          </Product>
          <Clock>08 Nov 2016<br />03:49 PM</Clock>
        </Brand>
      </MenuRow>
      <Main>
        <Side>
          <InfoLine>Job : 8w002172a0</InfoLine>
          <InfoLine>Step: cam</InfoLine>
          <Framed><WideButton $align="left">Job Matrix ...</WideButton></Framed>
          <LayerArea><Layers /></LayerArea>
          <SideFill />
          <Selected>Selected : 0</Selected>
        </Side>
        <Canvas>
          <BoardArt />
          <DrillChart />
        </Canvas>
        <Tools>
          <ToolGrid $edge={tealDark}>
            {navIcons.map(([name, art, tone]) => (
              <ToolButton key={name} $tone={tone} aria-label={name}><ToolIcon>{art}</ToolIcon></ToolButton>
            ))}
          </ToolGrid>
          <ToolGrid $edge="#6b6b6b">
            {editIcons.map(([name, art, tone]) => (
              <ToolButton key={name} $tone={tone} aria-label={name}><ToolIcon>{art}</ToolIcon></ToolButton>
            ))}
          </ToolGrid>
          <Overview>
            <svg width="159" height="91" viewBox="0 0 159 91">
              <path d="M0 0h159v91H0z" fill="#f00" />
              <path d="M0 1h159M0 89h159" stroke="#b08030" />
              <path d="M19 11h61v59H19z" fill="none" stroke="#70a8a8" strokeWidth="2" />
              <path d="M15 66l7 7M22 66l-7 7" stroke="#c0e0e0" />
            </svg>
          </Overview>
          <Coordinates>{'X = -47.293300mm\nY = 378.729227mm'}</Coordinates>
        </Tools>
      </Main>
      <PromptRow>
        <SmallTool aria-label="Snap"><svg width="20" height="20"><path d="M.5.500h19v19H.5zM4 4l12 12M4 9V4h5M11 16h5v-5" fill="none" stroke="#000" /></svg></SmallTool>
        <SmallTool aria-label="Angle"><svg width="20" height="20"><path d="M.5.500h19v19H.5zM3 16H17M3 16L16 4M6 5l8 8" fill="none" stroke="#000" /></svg></SmallTool>
        <SmallTool aria-label="Area"><svg width="20" height="20"><path d="M.5.500h19v19H.5zM5 8h10v8H5zM7 8V4h6v4" fill="none" stroke="#000" /></svg></SmallTool>
        <Prompt aria-label="Command" />
        <UnitsPanel><Select tone="aqua" value="MM" label="Coordinate units" /></UnitsPanel>
      </PromptRow>
      <StatusLine />
      <TaskBar>
        <Orb />
        {['#3a6ab0', '#c03a3a', '', '#e08030', '#50b090', '#2080a0', '#fff', '#8a7a90', '#3a68c0', '#608050'].map((c, i) => (
          <Task key={i} $on={c === '#fff'} aria-label={`Task ${i + 1}`}><i style={{ background: c || 'transparent' }} /></Task>
        ))}
      </TaskBar>
      <Popview />
      <DrillManager />
    </Page>
  );
}
